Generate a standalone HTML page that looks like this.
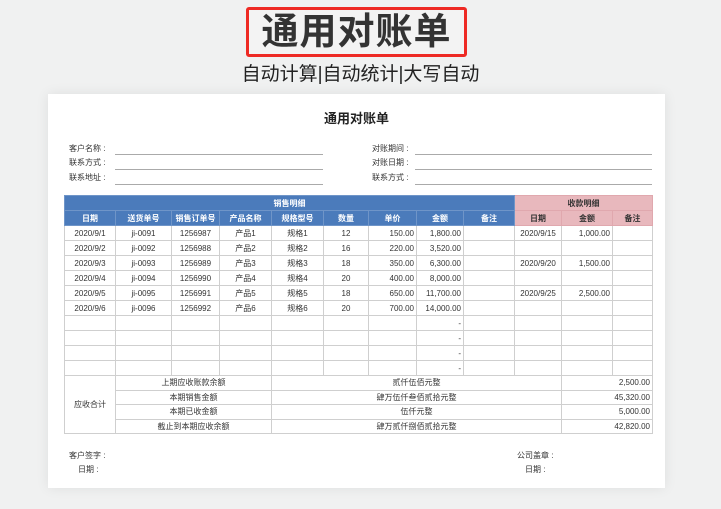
<!DOCTYPE html>
<html><head><meta charset="utf-8"><style>
*{margin:0;padding:0;box-sizing:border-box}
body{width:721px;height:509px;background:#f0f1f1;position:relative;overflow:hidden;font-family:"Liberation Sans","Noto Sans CJK SC",sans-serif;color:#333}
.abs{position:absolute}
.redbox{left:246px;top:7px;width:221px;height:50px;border:3px solid #ee2a24;border-radius:3px;background:#f3f3f3}
.big{left:246px;top:7px;width:221px;height:50px;text-align:center;font-size:37px;font-weight:bold;line-height:50px;color:#333;letter-spacing:1px}
.sub{left:200px;top:62px;width:321px;text-align:center;font-size:19px;line-height:26px;color:#222}
.card{left:48px;top:94px;width:617px;height:394px;background:#fff;box-shadow:0 0 12px rgba(0,0,0,.08)}
.t{font-size:8px;color:#333;white-space:nowrap}
.line{height:1px;background:#aaa}
table{position:absolute;left:64px;top:195px;border-collapse:collapse;table-layout:fixed;font-size:8px;color:#333}
td{border:1px solid #cfcfcf;height:15px;text-align:center;padding:0 2px;white-space:nowrap;overflow:hidden;line-height:13px}
.hb{background:#4b7bbb;color:#fff;font-weight:bold;border-color:#6f95c8}
.hp{background:#e8b8bd;color:#333;font-weight:bold;border-color:#e0a8ae}
.r{text-align:right}
.s td{height:14.5px}
</style></head><body>
<div class="abs redbox"></div>
<div class="abs big">通用对账单</div>
<div class="abs sub">自动计算|自动统计|大写自动</div>
<div class="abs card"></div>
<div class="abs" style="left:48px;top:108px;width:617px;text-align:center;font-size:13px;font-weight:bold;color:#222">通用对账单</div>
<div class="abs t" style="left:69px;top:143px">客户名称 :</div>
<div class="abs t" style="left:69px;top:157px">联系方式 :</div>
<div class="abs t" style="left:69px;top:172px">联系地址 :</div>
<div class="abs line" style="left:115px;top:154px;width:208px"></div>
<div class="abs line" style="left:115px;top:169px;width:208px"></div>
<div class="abs line" style="left:115px;top:184px;width:208px"></div>
<div class="abs t" style="left:372px;top:143px">对账期间 :</div>
<div class="abs t" style="left:372px;top:157px">对账日期 :</div>
<div class="abs t" style="left:372px;top:172px">联系方式 :</div>
<div class="abs line" style="left:415px;top:154px;width:237px"></div>
<div class="abs line" style="left:415px;top:169px;width:237px"></div>
<div class="abs line" style="left:415px;top:184px;width:237px"></div>
<table>
<colgroup><col style="width:51px"><col style="width:56px"><col style="width:48px"><col style="width:52px"><col style="width:52px"><col style="width:45px"><col style="width:48px"><col style="width:47px"><col style="width:51px"><col style="width:47px"><col style="width:51px"><col style="width:40px"></colgroup>
<tr><td colspan="9" class="hb">销售明细</td><td colspan="3" class="hp">收款明细</td></tr>
<tr><td class="hb">日期</td><td class="hb">送货单号</td><td class="hb">销售订单号</td><td class="hb">产品名称</td><td class="hb">规格型号</td><td class="hb">数量</td><td class="hb">单价</td><td class="hb">金额</td><td class="hb">备注</td><td class="hp">日期</td><td class="hp">金额</td><td class="hp">备注</td></tr>
<tr><td>2020/9/1</td><td>ji-0091</td><td>1256987</td><td>产品1</td><td>规格1</td><td>12</td><td class="r">150.00</td><td class="r">1,800.00</td><td></td><td>2020/9/15</td><td class="r">1,000.00</td><td></td></tr>
<tr><td>2020/9/2</td><td>ji-0092</td><td>1256988</td><td>产品2</td><td>规格2</td><td>16</td><td class="r">220.00</td><td class="r">3,520.00</td><td></td><td></td><td></td><td></td></tr>
<tr><td>2020/9/3</td><td>ji-0093</td><td>1256989</td><td>产品3</td><td>规格3</td><td>18</td><td class="r">350.00</td><td class="r">6,300.00</td><td></td><td>2020/9/20</td><td class="r">1,500.00</td><td></td></tr>
<tr><td>2020/9/4</td><td>ji-0094</td><td>1256990</td><td>产品4</td><td>规格4</td><td>20</td><td class="r">400.00</td><td class="r">8,000.00</td><td></td><td></td><td></td><td></td></tr>
<tr><td>2020/9/5</td><td>ji-0095</td><td>1256991</td><td>产品5</td><td>规格5</td><td>18</td><td class="r">650.00</td><td class="r">11,700.00</td><td></td><td>2020/9/25</td><td class="r">2,500.00</td><td></td></tr>
<tr><td>2020/9/6</td><td>ji-0096</td><td>1256992</td><td>产品6</td><td>规格6</td><td>20</td><td class="r">700.00</td><td class="r">14,000.00</td><td></td><td></td><td></td><td></td></tr>
<tr><td></td><td></td><td></td><td></td><td></td><td></td><td></td><td class="r">-</td><td></td><td></td><td></td><td></td></tr>
<tr><td></td><td></td><td></td><td></td><td></td><td></td><td></td><td class="r">-</td><td></td><td></td><td></td><td></td></tr>
<tr><td></td><td></td><td></td><td></td><td></td><td></td><td></td><td class="r">-</td><td></td><td></td><td></td><td></td></tr>
<tr><td></td><td></td><td></td><td></td><td></td><td></td><td></td><td class="r">-</td><td></td><td></td><td></td><td></td></tr>
<tr class="s"><td rowspan="4">应收合计</td><td colspan="3">上期应收账款余额</td><td colspan="6">贰仟伍佰元整</td><td colspan="2" class="r">2,500.00</td></tr>
<tr class="s"><td colspan="3">本期销售金额</td><td colspan="6">肆万伍仟叁佰贰拾元整</td><td colspan="2" class="r">45,320.00</td></tr>
<tr class="s"><td colspan="3">本期已收金额</td><td colspan="6">伍仟元整</td><td colspan="2" class="r">5,000.00</td></tr>
<tr class="s"><td colspan="3">截止到本期应收余额</td><td colspan="6">肆万贰仟捌佰贰拾元整</td><td colspan="2" class="r">42,820.00</td></tr>
</table>
<div class="abs t" style="left:69px;top:450px">客户签字 :</div>
<div class="abs t" style="left:78px;top:464px">日期 :</div>
<div class="abs t" style="left:517px;top:450px">公司盖章 :</div>
<div class="abs t" style="left:525px;top:464px">日期 :</div>
</body></html>
